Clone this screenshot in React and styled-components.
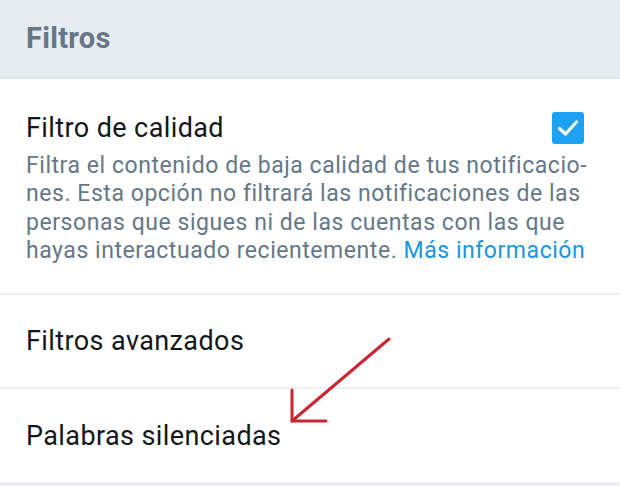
import React from "react";
import styled, { createGlobalStyle } from "styled-components";

const GlobalStyle = createGlobalStyle`
  html, body {
    margin: 0;
    padding: 0;
    background: #ffffff;
  }
  body {
    font-family: Roboto, "Noto Sans", Arial, sans-serif;
    -webkit-font-smoothing: antialiased;
  }
`;

const Screen = styled.div`
  position: relative;
  width: 620px;
  height: 486px;
  overflow: hidden;
  background: #eef0f4;
  display: flex;
  flex-direction: column;
`;

const Header = styled.header`
  height: 79px;
  flex-shrink: 0;
  background: #e6ecf0;
  border-bottom: 2px solid #dfe5ea;
  display: flex;
  align-items: center;
  padding: 0 0 2px 26px;
  box-sizing: border-box;
`;

const HeaderTitle = styled.h2`
  margin: 0;
  font-size: 29px;
  font-weight: 700;
  color: #657786;
  letter-spacing: 0.3px;
`;

const List = styled.div`
  background: #ffffff;
  display: flex;
  flex-direction: column;
`;

const Row = styled.div`
  display: flex;
  align-items: ${(p) => (p.$top ? "flex-start" : "center")};
  padding: ${(p) => (p.$top ? "33px 36px 28px 26px" : "0 36px 0 26px")};
  height: ${(p) => (p.$height ? `${p.$height}px` : "auto")};
  box-sizing: border-box;
  border-bottom: ${(p) => (p.$last ? "none" : "2px solid #eceff2")};
`;

const RowBody = styled.div`
  flex: 1;
  min-width: 0;
`;

const RowTitle = styled.div`
  font-size: 27px;
  line-height: 32px;
  color: #14171a;
  letter-spacing: 0.4px;
`;

const Description = styled.p`
  margin: 8px 0 0;
  font-size: 23px;
  line-height: 28.3px;
  color: #657786;
  letter-spacing: 0.55px;
  white-space: nowrap;
`;

const Link = styled.a`
  color: #1b95e0;
  text-decoration: none;
`;

const CheckBox = styled.span`
  width: 32px;
  height: 32px;
  flex-shrink: 0;
  margin-left: 12px;
  border-radius: 3px;
  background: #1da1f2;
  display: flex;
  align-items: center;
  justify-content: center;
`;

const Arrow = styled.svg`
  position: absolute;
  left: 0;
  top: 0;
  pointer-events: none;
`;

const lines = [
  "Filtra el contenido de baja calidad de tus notificacio-",
  "nes. Esta opción no filtrará las notificaciones de las",
  "personas que sigues ni de las cuentas con las que",
];

export default function App() {
  return (
    <>
      <GlobalStyle />
      <Screen>
        <Header>
          <HeaderTitle>Filtros</HeaderTitle>
        </Header>
        <List>
          <Row $top>
            <RowBody>
              <RowTitle>Filtro de calidad</RowTitle>
              <Description>
                {lines.map((l) => (
                  <React.Fragment key={l}>
                    {l}
                    <br />
                  </React.Fragment>
                ))}
                hayas interactuado recientemente.{" "}
                <Link href="#">Más información</Link>
              </Description>
            </RowBody>
            <CheckBox>
              <svg width="32" height="32" viewBox="0 0 32 32">
                <path
                  d="M7.5 16.5l6 5.5L24.5 10"
                  fill="none"
                  stroke="#ffffff"
                  strokeWidth="3.2"
                  strokeLinecap="round"
                  strokeLinejoin="round"
                />
              </svg>
            </CheckBox>
          </Row>
          <Row $height={94}>
            <RowTitle>Filtros avanzados</RowTitle>
          </Row>
          <Row $height={93} $last>
            <RowTitle>Palabras silenciadas</RowTitle>
          </Row>
        </List>
        <Arrow width="620" height="486" viewBox="0 0 620 486">
          <g
            fill="none"
            stroke="#cc2433"
            strokeWidth="3"
            strokeLinecap="round"
            strokeLinejoin="round"
          >
            <path d="M389 339L292 421" />
            <path d="M292 390L292 421L326 421" />
          </g>
        </Arrow>
      </Screen>
    </>
  );
}
